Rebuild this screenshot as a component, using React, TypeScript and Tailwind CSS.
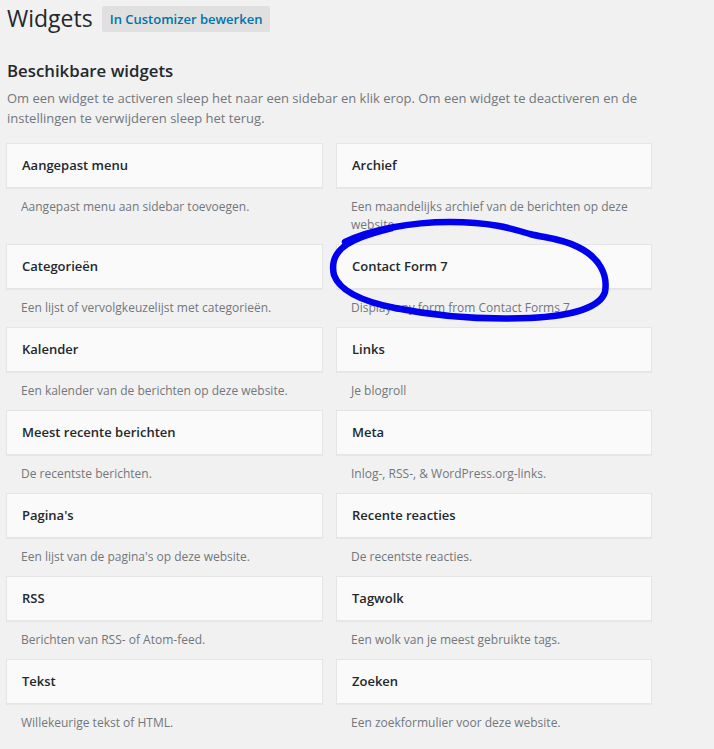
import React from "react";

const widgets: [string, string][] = [
  ["Aangepast menu", "Aangepast menu aan sidebar toevoegen."],
  ["Archief", "Een maandelijks archief van de berichten op deze website."],
  ["Categorieën", "Een lijst of vervolgkeuzelijst met categorieën."],
  ["Contact Form 7", "Display any form from Contact Forms 7"],
  ["Kalender", "Een kalender van de berichten op deze website."],
  ["Links", "Je blogroll"],
  ["Meest recente berichten", "De recentste berichten."],
  ["Meta", "Inlog-, RSS-, & WordPress.org-links."],
  ["Pagina's", "Een lijst van de pagina's op deze website."],
  ["Recente reacties", "De recentste reacties."],
  ["RSS", "Berichten van RSS- of Atom-feed."],
  ["Tagwolk", "Een wolk van je meest gebruikte tags."],
  ["Tekst", "Willekeurige tekst of HTML."],
  ["Zoeken", "Een zoekformulier voor deze website."],
];

export default function App() {
  return (
    <div className="relative min-h-[749px] w-full overflow-hidden bg-[#f1f1f1] font-['Open_Sans',sans-serif] text-[#23282d]">
      <div className="flex items-center pl-[7px] pt-[4px]">
        <h1 className="text-[23px] font-normal leading-[29px]">Widgets</h1>
        <span className="ml-[9px] rounded-[2px] bg-[#e0e0e0] px-[8px] text-[13px] font-semibold leading-[26px] text-[#0073aa]">
          In Customizer bewerken
        </span>
      </div>
      <h2 className="mt-[26px] pl-[7px] text-[16.8px] font-semibold leading-[23px]">Beschikbare widgets</h2>
      <p className="mt-[7px] pl-[7px] pr-[6px] text-[13px] leading-[19.5px] text-[#72777c]">
        Om een widget te activeren sleep het naar een sidebar en klik erop. Om een widget te deactiveren en de
        instellingen te verwijderen sleep het terug.
      </p>
      <div className="ml-[6px] mt-[15px] grid grid-cols-[317px_316px] gap-x-[13px]">
        {widgets.map(([title, desc]) => (
          <div key={title}>
            <div className="flex h-[45px] items-center border border-[#e5e5e5] bg-[#fafafa] px-[15px] shadow-[0_1px_1px_rgba(0,0,0,0.04)]">
              <span className="text-[13px] font-semibold leading-none">{title}</span>
            </div>
            <div className="px-[15px] py-[10px] text-[12px] leading-[18px] text-[#72777c]">{desc}</div>
          </div>
        ))}
      </div>
      <svg
        className="pointer-events-none absolute left-0 top-0"
        width="714"
        height="749"
        viewBox="0 0 714 749"
      >
        <path
          d="M 345 242 C 370 230, 410 222, 450 222 C 490 222, 510 228, 530 234 C 545 238, 560 238, 578 247 C 600 258, 608 275, 605 292 C 600 308, 570 316, 530 318 C 480 320, 430 315, 395 308 C 365 302, 340 292, 334 275 C 330 258, 338 246, 362 237 C 372 233, 380 231, 392 228"
          fill="none"
          stroke="#0000ee"
          strokeWidth="6.5"
          strokeLinecap="round"
          strokeLinejoin="round"
        />
      </svg>
    </div>
  );
}
